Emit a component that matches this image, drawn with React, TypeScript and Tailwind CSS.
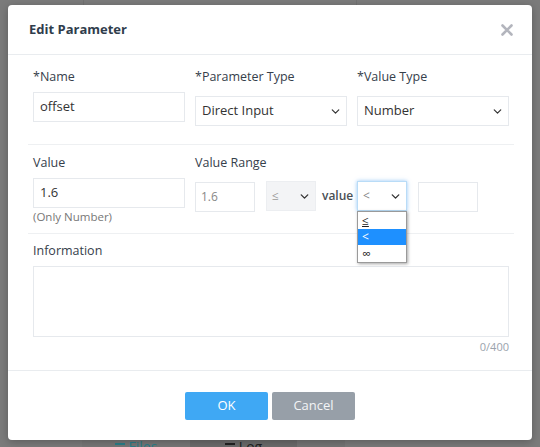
import React from "react";
import { ChevronDown } from "lucide-react";

const font = { fontFamily: '"Open Sans", "Noto Sans", sans-serif' };

function Select({ text, muted }: { text: string; muted?: boolean }) {
  return (
    <div
      className={`flex h-[30px] items-center justify-between border border-[#e6e9ed] bg-white pl-[6px] pr-[4px] ${
        muted ? "text-[#999]" : "text-[#333]"
      } text-[13px]`}
    >
      <span>{text}</span>
      <ChevronDown size={13} strokeWidth={2.25} className="text-[#333]" />
    </div>
  );
}

export default function App() {
  return (
    <div className="relative h-[447px] w-[540px] overflow-hidden bg-[#7b7b7b]" style={font}>
      {/* background page hints */}
      <div className="flex h-full w-full">
        <div className="h-full w-[84px] border-r border-[#727272]" />
        <div className="h-full w-[273px] border-r border-[#727272]" />
        <div className="h-full flex-1" />
      </div>
      <div className="absolute bottom-0 left-0 flex h-[8px] w-full">
        <div className="w-[82px] bg-[#7b7b7b]" />
        <div className="flex w-[108px] items-start justify-center gap-[4px] bg-[#777777] pt-[1px] text-[14px] leading-[14px] text-[#2a7f8a]">
          <span className="mt-[3px] block h-[2px] w-[10px] bg-[#2a7f8a]" />
          <span>Files</span>
        </div>
        <div className="flex w-[107px] items-start justify-center gap-[4px] bg-[#6b6b6b] pt-[1px] text-[14px] leading-[14px] text-[#222]">
          <span className="mt-[3px] block h-[2px] w-[10px] bg-[#222]" />
          <span>Log</span>
        </div>
        <div className="w-[48px] bg-[#757575]" />
        <div className="flex-1 bg-[#7b7b7b]" />
      </div>

      {/* modal */}
      <div className="absolute left-[8px] top-[5px] flex h-[435px] w-[524px] flex-col rounded-[4px] bg-white shadow-[0_2px_8px_rgba(0,0,0,0.25)]">
        <div className="flex h-[50px] items-center justify-between border-b border-[#e9ecef] pl-[21px] pr-[19px]">
          <span className="text-[13px] font-bold text-[#2f3d4c]">Edit Parameter</span>
          <svg width="12" height="12" viewBox="0 0 12 12">
            <path d="M1.5 1.5 L10.5 10.5 M10.5 1.5 L1.5 10.5" stroke="#b3b5bd" strokeWidth="2.6" strokeLinecap="round" />
          </svg>
        </div>

        <div className="relative flex-1 pl-[20px] pr-[18px]">
          {/* section 1 */}
          <div className="grid grid-cols-3 gap-[10px] border-b border-[#eef0f2] px-[5px] pb-[18px] pt-[13px]">
            <div>
              <div className="h-[18px] text-[12.5px] leading-[18px] text-[#36404b]">*Name</div>
              <div className="mt-[6px] flex h-[30px] items-center border border-[#e6e9ed] px-[6px] text-[13px] text-[#333]">
                offset
              </div>
            </div>
            <div>
              <div className="h-[18px] text-[12.5px] leading-[18px] text-[#36404b]">*Parameter Type</div>
              <div className="mt-[10px]">
                <Select text="Direct Input" />
              </div>
            </div>
            <div>
              <div className="h-[18px] text-[12.5px] leading-[18px] text-[#36404b]">*Value Type</div>
              <div className="mt-[10px]">
                <Select text="Number" />
              </div>
            </div>
          </div>

          {/* section 2 */}
          <div className="flex gap-[10px] border-b border-[#eef0f2] px-[5px] pb-[8px] pt-[9px]">
            <div className="w-[152px]">
              <div className="h-[18px] text-[12.5px] leading-[18px] text-[#36404b]">Value</div>
              <div className="mt-[6px] flex h-[30px] items-center border border-[#e6e9ed] px-[6px] text-[13px] text-[#333]">
                1.6
              </div>
              <div className="mt-[1px] h-[16px] text-[11.5px] leading-[16px] text-[#777]">(Only Number)</div>
            </div>
            <div className="flex-1">
              <div className="h-[18px] text-[12.5px] leading-[18px] text-[#36404b]">Value Range</div>
              <div className="mt-[9px] flex items-start">
                <div className="mt-[1px] flex h-[30px] w-[60px] items-center border border-[#e6e9ed] px-[5px] text-[12px] text-[#888]">
                  1.6
                </div>
                <div className="ml-[11px] flex h-[30px] w-[50px] items-center justify-between border border-[#eceef1] bg-[#f3f4f6] pl-[5px] pr-[4px] text-[12px] text-[#999]">
                  <span>≤</span>
                  <ChevronDown size={13} strokeWidth={2.5} className="text-[#333]" />
                </div>
                <div className="ml-[6px] flex h-[30px] w-[35px] items-center text-[12px] font-semibold text-[#4a4f55]">value</div>
                <div className="relative w-[50px]">
                  <div className="flex h-[30px] w-[50px] items-center justify-between border border-[#b9dcf7] bg-white pl-[5px] pr-[4px] text-[12px] text-[#888] shadow-[0_0_4px_rgba(80,160,240,0.6)]">
                    <span>&lt;</span>
                    <ChevronDown size={13} strokeWidth={2.5} className="text-[#333]" />
                  </div>
                  <div className="absolute left-0 top-[30px] z-10 flex w-[50px] flex-col border border-[#9a9a9a] bg-white text-[12px] text-[#222] shadow-[1px_1px_3px_rgba(0,0,0,0.35)]">
                    <div className="flex h-[17px] items-center overflow-hidden px-[4px] leading-[14px] underline">≤</div>
                    <div className="flex h-[16px] items-center overflow-hidden bg-[#1e90ff] px-[4px] leading-[14px] text-white">&lt;</div>
                    <div className="flex h-[17px] items-center overflow-hidden px-[4px] leading-[14px]">∞</div>
                  </div>
                </div>
                <div className="ml-[11px] mt-[1px] h-[30px] w-[60px] border border-[#e6e9ed]" />
              </div>
            </div>
          </div>

          {/* section 3 */}
          <div className="px-[5px] pt-[8px]">
            <div className="h-[18px] text-[12.5px] leading-[18px] text-[#36404b]">Information</div>
            <div className="mt-[6px] h-[71px] border border-[#e6e9ed]" />
            <div className="mt-[2px] text-right text-[11px] leading-[16px] text-[#9aa3ad]">0/400</div>
          </div>
        </div>

        <div className="flex h-[70px] justify-center gap-[4px] border-t border-[#e9ecef] pt-[21px]">
          <div className="flex h-[28px] w-[83px] items-center justify-center rounded-[2px] bg-[#3fa8f4] text-[13px] text-white">
            OK
          </div>
          <div className="flex h-[28px] w-[83px] items-center justify-center rounded-[2px] bg-[#979fa8] text-[13px] text-[#f3f4f6]">
            Cancel
          </div>
        </div>
      </div>
    </div>
  );
}
